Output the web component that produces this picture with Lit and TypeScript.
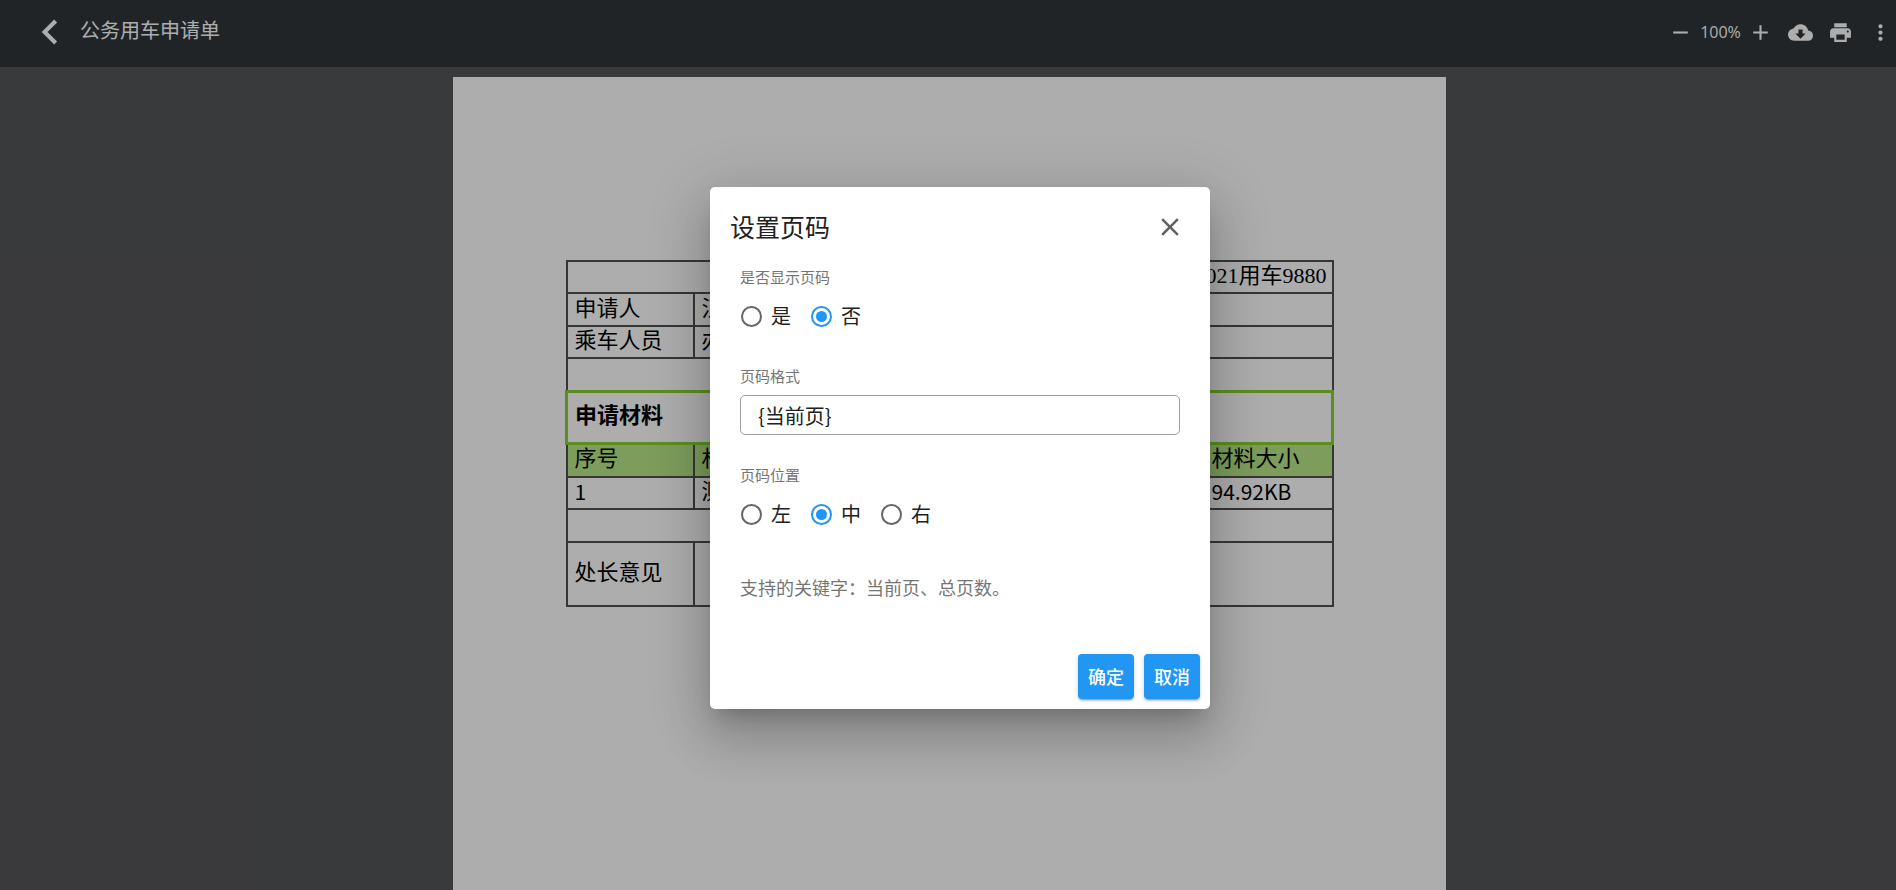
import { LitElement, html, css, svg } from "lit";
import { customElement, property, state } from "lit/decorators.js";

const ICONS: Record<string, string> = {
  back: "M15.41 7.41L14 6l-6 6 6 6 1.41-1.41L10.83 12z",
  minus: "M19 13H5v-2h14v2z",
  plus: "M19 13h-6v6h-2v-6H5v-2h6V5h2v6h6v2z",
  cloud:
    "M19.35 10.04C18.67 6.59 15.64 4 12 4 9.11 4 6.6 5.64 5.35 8.04 2.34 8.36 0 10.91 0 14c0 3.31 2.69 6 6 6h13c2.76 0 5-2.24 5-5 0-2.64-2.05-4.78-4.65-4.96zM17 13l-5 5-5-5h3V9h4v4h3z",
  print:
    "M19 8H5c-1.66 0-3 1.34-3 3v6h4v4h12v-4h4v-6c0-1.66-1.34-3-3-3zm-3 11H8v-5h8v5zm3-7c-.55 0-1-.45-1-1s.45-1 1-1 1 .45 1 1-.45 1-1 1zm-1-9H6v4h12V3z",
  more: "M12 8c1.1 0 2-.9 2-2s-.9-2-2-2-2 .9-2 2 .9 2 2 2zm0 2c-1.1 0-2 .9-2 2s.9 2 2 2 2-.9 2-2-.9-2-2-2zm0 6c-1.1 0-2 .9-2 2s.9 2 2 2 2-.9 2-2-.9-2-2-2z",
  close:
    "M19 6.41L17.59 5 12 10.59 6.41 5 5 6.41 10.59 12 5 17.59 6.41 19 12 13.41 17.59 19 19 17.59 13.41 12z",
};

const icon = (name: string) =>
  html`<svg viewBox="0 0 24 24" aria-hidden="true">${svg`<path d=${ICONS[name]} />`}</svg>`;

const buttonReset = css`
  button {
    margin: 0;
    padding: 0;
    border: 0;
    background: none;
    color: inherit;
    font: inherit;
    cursor: pointer;
  }
  svg {
    display: block;
    width: 100%;
    height: 100%;
    fill: currentColor;
  }
`;

@customElement("viewer-toolbar")
export class ViewerToolbar extends LitElement {
  @property() heading = "";
  @property({ type: Number }) zoom = 100;

  static styles = [
    buttonReset,
    css`
      :host {
        display: flex;
        align-items: center;
        justify-content: space-between;
        height: 67px;
        padding: 0 3px 3px 25px;
        box-sizing: border-box;
        background: #323639;
        color: #fff;
      }
      .start,
      .tools,
      .zoom {
        display: flex;
        align-items: center;
      }
      .start {
        gap: 5px;
      }
      .start .back {
        width: 50px;
        height: 50px;
      }
      h1 {
        margin: 0;
        padding-bottom: 4px;
        font-size: 20px;
        line-height: 28px;
        font-weight: 400;
      }
      .tools {
        gap: 15px;
      }
      .zoom {
        gap: 7px;
      }
      .tool {
        width: 25px;
        height: 25px;
      }
      .value {
        width: 41px;
        text-align: center;
        font-family: "Open Sans", sans-serif;
        font-size: 16px;
        line-height: 20px;
      }
    `,
  ];

  render() {
    return html`
      <div class="start">
        <button class="back" aria-label="返回">${icon("back")}</button>
        <h1>${this.heading}</h1>
      </div>
      <div class="tools">
        <div class="zoom">
          <button class="tool" aria-label="缩小" @click=${() => (this.zoom -= 10)}>${icon("minus")}</button>
          <span class="value">${this.zoom}%</span>
          <button class="tool" aria-label="放大" @click=${() => (this.zoom += 10)}>${icon("plus")}</button>
        </div>
        <button class="tool" aria-label="下载">${icon("cloud")}</button>
        <button class="tool" aria-label="打印">${icon("print")}</button>
        <button class="tool" aria-label="更多">${icon("more")}</button>
      </div>
    `;
  }
}

@customElement("document-page")
export class DocumentPage extends LitElement {
  static styles = css`
    :host {
      display: block;
      flex: none;
      width: 993px;
      min-height: 1404px;
      padding: 183px 112px 0;
      box-sizing: border-box;
      background: #fff;
      color: #000;
    }
    table {
      width: 100%;
      border-collapse: collapse;
      table-layout: fixed;
      font-size: 22px;
      line-height: 22px;
    }
    .c1 {
      width: 127px;
    }
    .c3 {
      width: 129px;
    }
    td,
    th {
      height: 32px;
      padding: 0 7px 8px;
      box-sizing: border-box;
      border: 2px solid #505050;
      text-align: left;
      font-weight: 400;
      white-space: nowrap;
    }
    tr:nth-child(even) td {
      height: 33px;
    }
    .code {
      padding: 0 5px 3px;
      text-align: right;
      font-family: "Liberation Serif", "Noto Sans CJK SC", serif;
    }
    .section td {
      height: 52px;
      border: 3px solid #86d030;
      font-weight: 700;
    }
    .head th {
      height: 34px;
      background: #b7e887;
    }
    .number {
      padding-bottom: 4px;
      font-size: 21px;
    }
    .opinion td {
      height: 64px;
    }
  `;

  render() {
    return html`
      <table>
        <colgroup>
          <col class="c1" />
          <col />
          <col class="c3" />
        </colgroup>
        <tbody>
          <tr><td class="code" colspan="3">2021用车9880</td></tr>
          <tr><td>申请人</td><td colspan="2">汪</td></tr>
          <tr><td>乘车人员</td><td colspan="2">办</td></tr>
          <tr><td colspan="3"></td></tr>
          <tr class="section"><td colspan="3">申请材料</td></tr>
          <tr class="head"><th>序号</th><th>材</th><th>材料大小</th></tr>
          <tr><td class="number">1</td><td>测</td><td class="number">94.92KB</td></tr>
          <tr><td colspan="3"></td></tr>
          <tr class="opinion"><td>处长意见</td><td colspan="2"></td></tr>
        </tbody>
      </table>
    `;
  }
}

@customElement("page-number-dialog")
export class PageNumberDialog extends LitElement {
  @state() private visible = "否";
  @state() private place = "中";

  static styles = [
    buttonReset,
    css`
      :host {
        display: flex;
        flex-direction: column;
        width: 500px;
        max-width: 90%;
        box-sizing: border-box;
        padding: 20px 10px 10px;
        border-radius: 5px;
        background: #fff;
        color: #212121;
        box-shadow:
          0 14px 19px -9px rgba(0, 0, 0, 0.2),
          0 30px 48px 4px rgba(0, 0, 0, 0.14),
          0 11px 58px 10px rgba(0, 0, 0, 0.12);
      }
      header {
        display: flex;
        align-items: center;
        justify-content: space-between;
        height: 40px;
        padding: 0 15px 0 10px;
      }
      h2 {
        margin: 0;
        padding-bottom: 2px;
        font-size: 25px;
        line-height: 38px;
        font-weight: 400;
      }
      .close {
        width: 30px;
        height: 30px;
        color: #616161;
      }
      form {
        display: flex;
        flex-direction: column;
        padding: 20px 20px 0;
      }
      fieldset {
        margin: 0;
        padding: 0;
        border: 0;
        min-width: 0;
      }
      .field {
        display: flex;
        flex-direction: column;
        height: 99px;
      }
      .caption {
        display: block;
        padding: 0;
        font-size: 15px;
        line-height: 20px;
        color: #757575;
      }
      .options {
        display: flex;
        gap: 20px;
        padding-top: 14px;
      }
      .option {
        display: flex;
        align-items: center;
        gap: 9px;
        padding-left: 1px;
        font-size: 20px;
        line-height: 30px;
      }
      .option + .option {
        padding-left: 0;
      }
      .option input {
        appearance: none;
        display: grid;
        place-items: center;
        flex: none;
        width: 21px;
        height: 21px;
        margin: 0;
        border: 2px solid #666;
        border-radius: 50%;
      }
      .option input:checked {
        border-color: #2196f3;
      }
      .option input:checked::before {
        content: "";
        width: 11px;
        height: 11px;
        border-radius: 50%;
        background: #2196f3;
      }
      .text {
        height: 40px;
        margin-top: 9px;
        padding: 0 17px;
        box-sizing: border-box;
        border: 1px solid #9e9e9e;
        border-radius: 5px;
        background: #fff;
        color: #212121;
        font: inherit;
        font-size: 20px;
        outline: none;
      }
      .hint {
        margin: 0;
        padding: 10px 0 0;
        font-size: 18px;
        line-height: 26px;
        color: #757575;
      }
      footer {
        display: flex;
        justify-content: flex-end;
        gap: 10px;
        padding-top: 54px;
      }
      footer .action {
        height: 45px;
        padding: 0 10px 2px;
        border-radius: 4px;
        background: #2196f3;
        color: #fff;
        font-size: 18px;
        font-weight: 500;
        box-shadow:
          0 3px 1px -2px rgba(0, 0, 0, 0.2),
          0 2px 2px 0 rgba(0, 0, 0, 0.14),
          0 1px 5px 0 rgba(0, 0, 0, 0.12);
      }
    `,
  ];

  private options(name: string, values: string[], current: string, pick: (v: string) => void) {
    return html`<div class="options">
      ${values.map(
        (v) => html`<label class="option">
          <input type="radio" name=${name} .value=${v} .checked=${v === current} @change=${() => pick(v)} />
          <span>${v}</span>
        </label>`,
      )}
    </div>`;
  }

  render() {
    return html`
      <header>
        <h2>设置页码</h2>
        <button class="close" aria-label="关闭">${icon("close")}</button>
      </header>
      <form>
        <fieldset class="field">
          <legend class="caption">是否显示页码</legend>
          ${this.options("visible", ["是", "否"], this.visible, (v) => (this.visible = v))}
        </fieldset>
        <div class="field">
          <label class="caption" for="format">页码格式</label>
          <input class="text" id="format" type="text" value="{当前页}" />
        </div>
        <fieldset class="field">
          <legend class="caption">页码位置</legend>
          ${this.options("place", ["左", "中", "右"], this.place, (v) => (this.place = v))}
        </fieldset>
        <p class="hint">支持的关键字：当前页、总页数。</p>
      </form>
      <footer>
        <button class="action">确定</button>
        <button class="action">取消</button>
      </footer>
    `;
  }
}

@customElement("app-root")
export class AppRoot extends LitElement {
  static styles = css`
    :host {
      position: relative;
      display: flex;
      flex-direction: column;
      height: 100vh;
      overflow: hidden;
      background: #555658;
      font-family: "Noto Sans CJK SC", sans-serif;
    }
    viewer-toolbar {
      flex: none;
    }
    .canvas {
      display: flex;
      justify-content: center;
      flex: 1;
      min-height: 0;
      padding: 10px 0 0 3px;
      overflow: hidden;
    }
    .scrim {
      position: absolute;
      inset: 0;
      display: flex;
      align-items: center;
      justify-content: center;
      padding: 6px 0 0 24px;
      background: rgba(0, 0, 0, 0.32);
    }
  `;

  render() {
    return html`
      <viewer-toolbar heading="公务用车申请单"></viewer-toolbar>
      <main class="canvas"><document-page></document-page></main>
      <div class="scrim">
        <page-number-dialog role="dialog" aria-modal="true" aria-label="设置页码"></page-number-dialog>
      </div>
    `;
  }
}
